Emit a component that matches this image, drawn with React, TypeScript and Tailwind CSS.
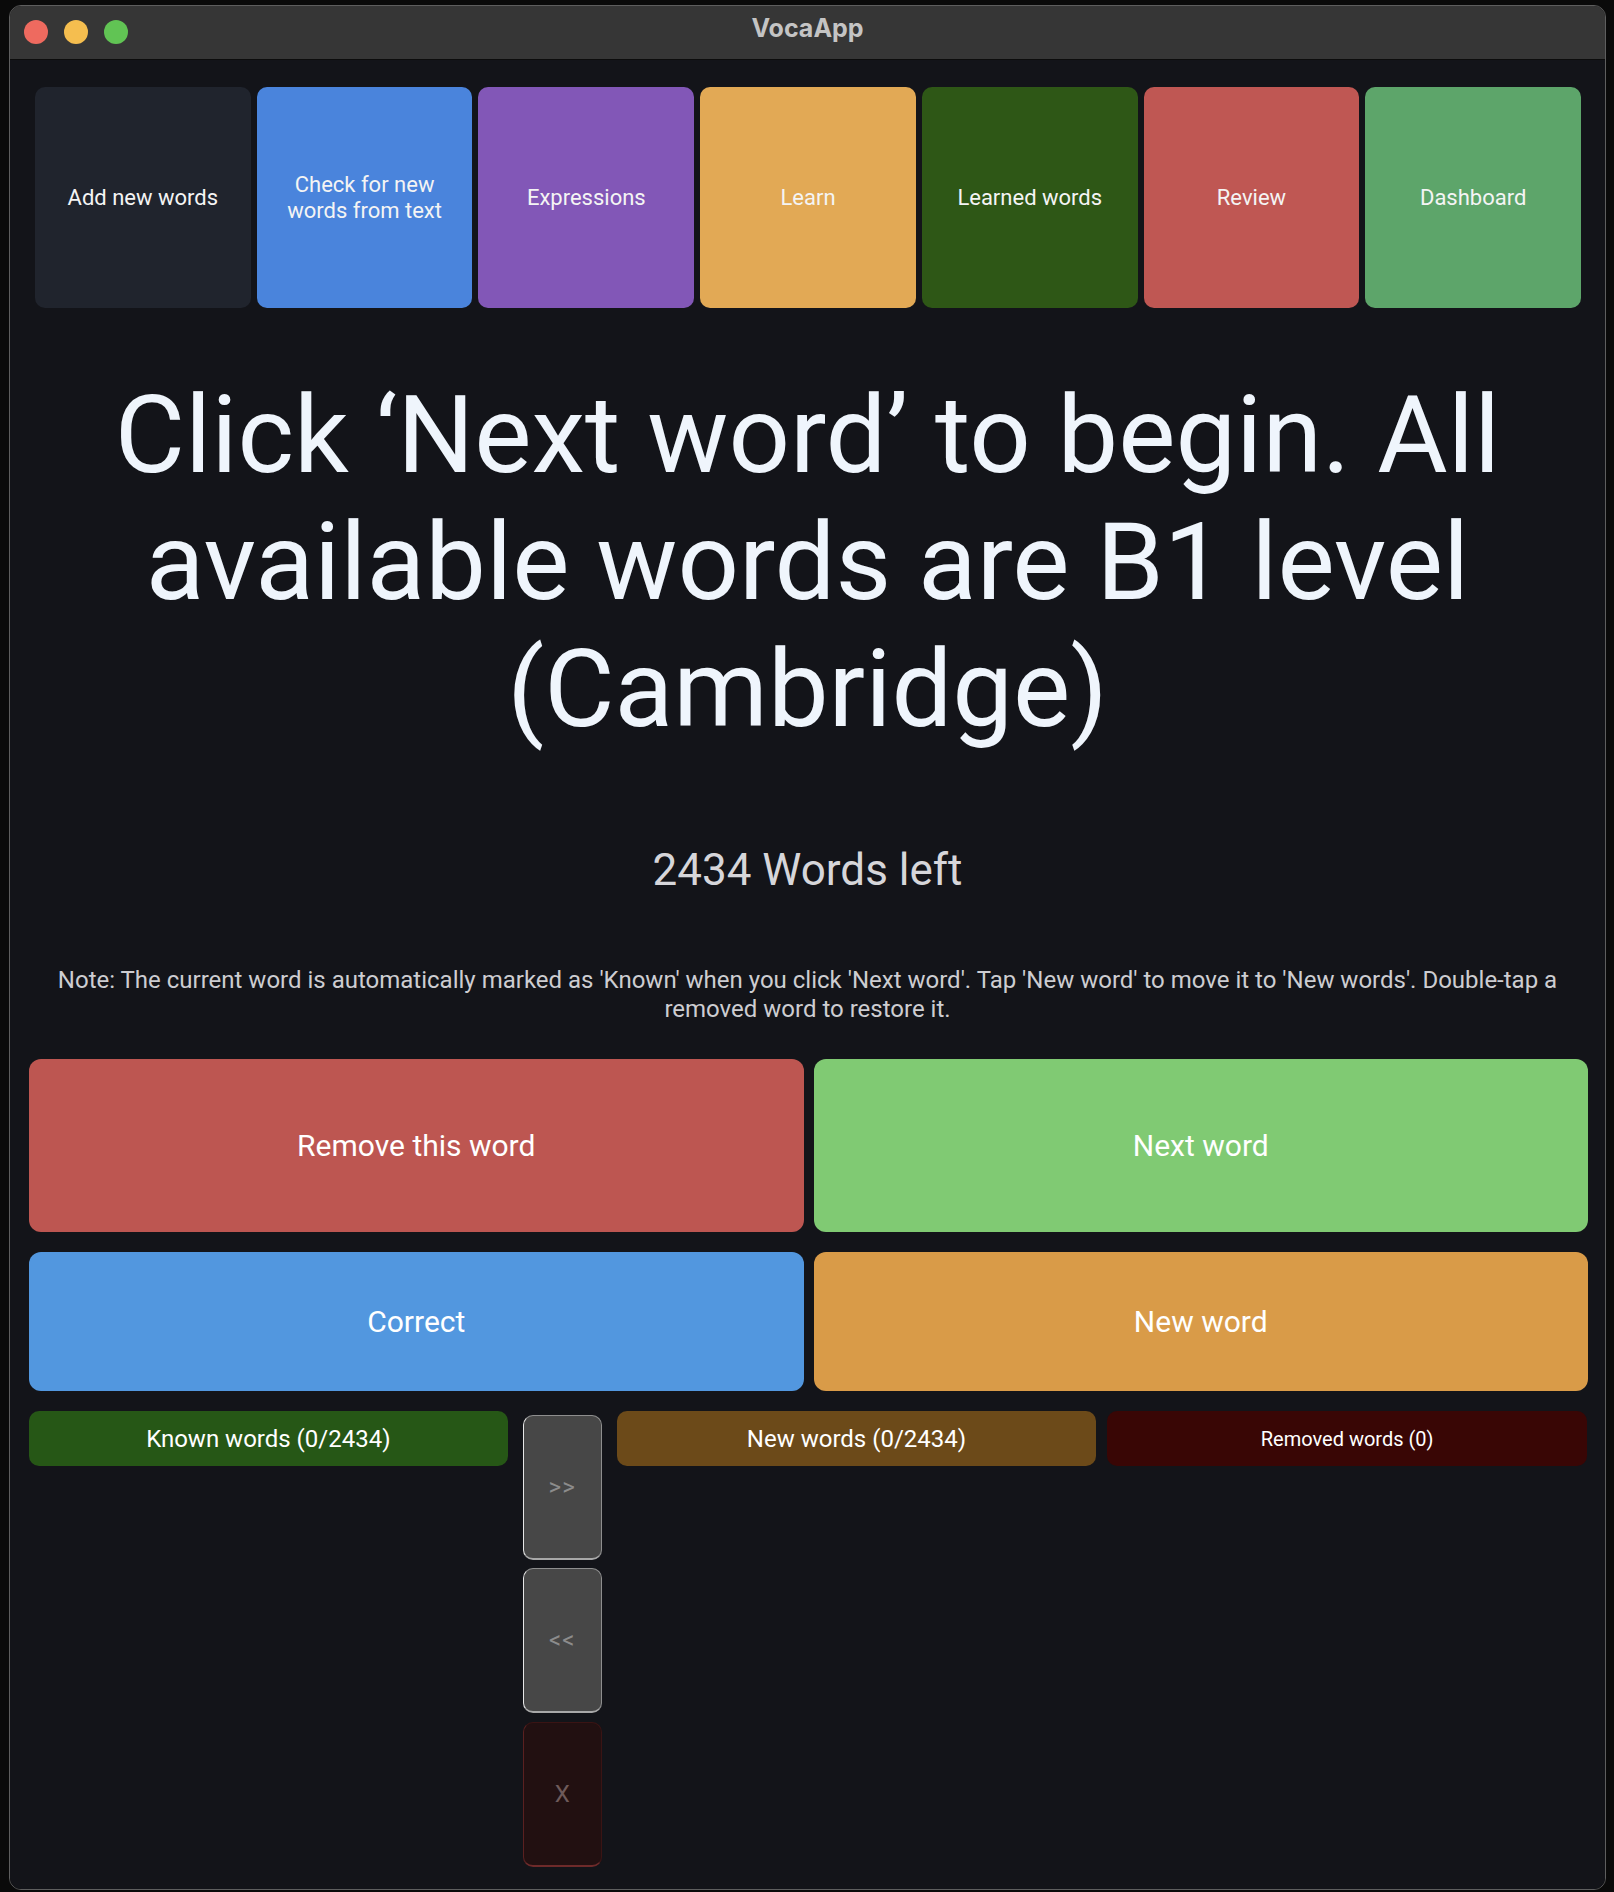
const tiles = [
  { label: "Add new words", bg: "bg-[#20242d]" },
  { label: "Check for new words from text", bg: "bg-[#4a84dc]" },
  { label: "Expressions", bg: "bg-[#8257b7]" },
  { label: "Learn", bg: "bg-[#e2a955]" },
  { label: "Learned words", bg: "bg-[#2e5716]" },
  { label: "Review", bg: "bg-[#bf5753]" },
  { label: "Dashboard", bg: "bg-[#5da56a]" },
];

function TitleBar() {
  return (
    <div className="relative flex h-[54px] shrink-0 items-center border-b border-[#0c0c0c] bg-[#363636]">
      <div className="flex gap-[16px] pb-[2px] pl-[14px]">
        <span className="h-[24px] w-[24px] rounded-full bg-[#ee6a5f]" />
        <span className="h-[24px] w-[24px] rounded-full bg-[#f5be4f]" />
        <span className="h-[24px] w-[24px] rounded-full bg-[#61c454]" />
      </div>
      <div className="absolute inset-0 flex items-center justify-center pb-[8px] text-[25px] font-bold text-[#c4c4c4] [font-family:Inter,'Liberation_Sans',sans-serif]">
        VocaApp
      </div>
    </div>
  );
}

export default function App() {
  return (
    <div className="h-[1892px] w-[1614px] bg-[#0a0a0a] pb-[2px] pl-[9px] pr-[8px] pt-[5px] [font-family:Roboto,'Liberation_Sans',sans-serif]">
      <div className="flex h-full flex-col overflow-hidden rounded-[12px] border border-[#5e5e5e]">
        <TitleBar />

        <div className="flex-1 bg-[#131419]">
          {/* Navigation tiles */}
          <div className="mt-[27px] flex gap-[6px] pl-[25px] pr-[24px]">
            {tiles.map((t) => (
              <button
                key={t.label}
                className={`flex h-[221px] flex-1 items-center justify-center rounded-[10px] px-[20px] text-center text-[22px] leading-[26px] text-[#f4f4f4] ${t.bg}`}
              >
                {t.label}
              </button>
            ))}
          </div>

          {/* Prompt */}
          <h1 className="mx-auto mt-[64px] w-[1560px] text-center text-[108px] font-normal leading-[127px] text-[#eff5fc]">
            Click ‘Next word’ to begin. All available words are B1 level (Cambridge)
          </h1>

          <p className="mt-[91px] text-center text-[44px] leading-[53px] text-[#d6d6da]">
            2434 Words left
          </p>

          <p className="mx-auto mt-[69px] w-[1560px] text-center text-[24px] leading-[29px] text-[#cdcdd1]">
            Note: The current word is automatically marked as 'Known' when you click 'Next word'. Tap 'New word' to move it to 'New words'. Double-tap a removed word to restore it.
          </p>

          {/* Action buttons */}
          <div className="mt-[35px] grid grid-cols-2 gap-x-[10px] gap-y-[20px] pl-[19px] pr-[17px]">
            <button className="h-[173px] rounded-[12px] bg-[#bd5651] text-[30px] text-white">
              Remove this word
            </button>
            <button className="h-[173px] rounded-[12px] bg-[#80ca73] text-[30px] text-white">
              Next word
            </button>
            <button className="h-[139px] rounded-[12px] bg-[#5297df] text-[30px] text-white">
              Correct
            </button>
            <button className="h-[139px] rounded-[12px] bg-[#d99b48] text-[30px] text-white">
              New word
            </button>
          </div>

          {/* Word lists */}
          <div className="mt-[20px] flex items-start pl-[19px] pr-[18px]">
            <div className="flex h-[55px] w-[479px] items-center justify-center rounded-[10px] bg-[#265716] text-[24px] text-white">
              Known words (0/2434)
            </div>

            <div className="mx-[15px] mt-[4px] flex w-[79px] flex-col gap-[8px]">
              <button className="flex h-[145px] items-center justify-center rounded-[10px] border border-[#8e8e8e] border-l-[#e6e6e6] border-b-2 border-b-[#a8a8a8] bg-[#474747] text-[24px] tracking-[1px] text-[#8c8c8c]">
                &gt;&gt;
              </button>
              <button className="flex h-[145px] items-center justify-center rounded-[10px] border border-[#8e8e8e] border-l-[#e6e6e6] border-b-2 border-b-[#a8a8a8] bg-[#474747] text-[24px] tracking-[1px] text-[#8c8c8c]">
                &lt;&lt;
              </button>
              <button className="mt-[1px] flex h-[145px] items-center justify-center rounded-[10px] border border-[#3a1414] border-l-[#5a2020] border-b-2 border-b-[#6e2a2a] bg-[#221011] text-[24px] text-[#6e5a5a]">
                X
              </button>
            </div>

            <div className="flex h-[55px] w-[480px] items-center justify-center rounded-[10px] bg-[#6c4a19] text-[24px] text-white">
              New words (0/2434)
            </div>

            <div className="ml-[11px] flex h-[55px] w-[480px] items-center justify-center rounded-[10px] bg-[#390605] text-[20px] text-white">
              Removed words (0)
            </div>
          </div>
        </div>
      </div>
    </div>
  );
}
